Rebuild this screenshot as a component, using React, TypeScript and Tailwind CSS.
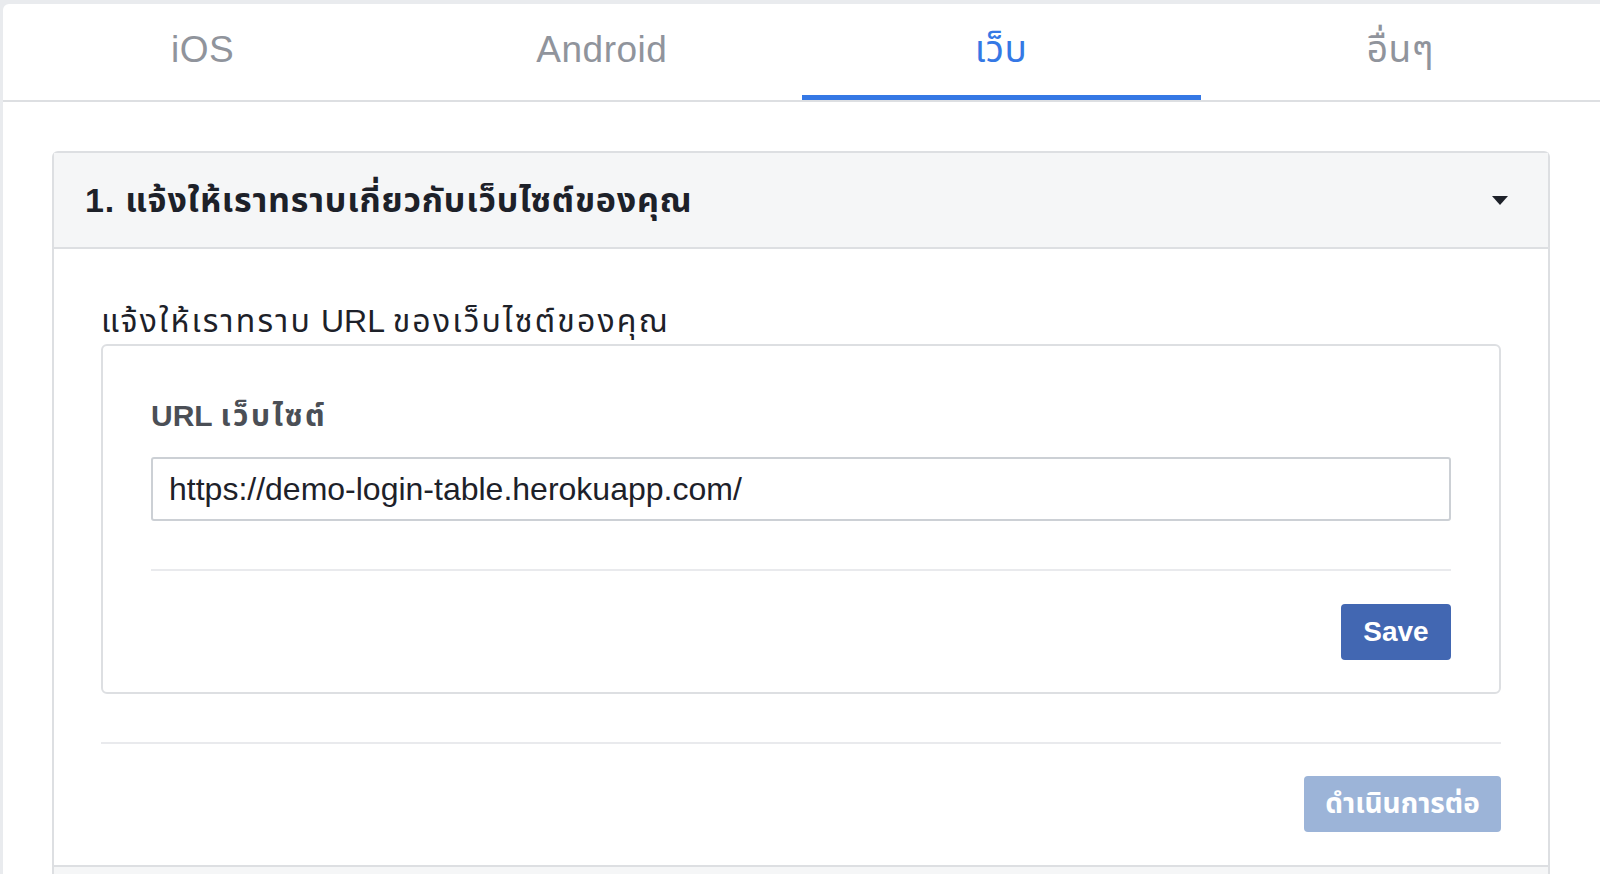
import { useState } from 'react';

const tabs = ['iOS', 'Android', 'เว็บ', 'อื่นๆ'];

export default function App() {
  const [active, setActive] = useState(2);
  const [url, setUrl] = useState('https://demo-login-table.herokuapp.com/');

  return (
    <div className="min-h-screen bg-[#e9ebee] pt-[4px] pl-[3px] font-['Liberation_Sans','Noto_Sans_Thai','Noto_Sans',sans-serif] text-[#1d2129]">
      <div className="min-h-[870px] overflow-hidden rounded-tl-[6px] bg-white">
        <div className="flex h-[98px] border-b-2 border-[#dddfe2]">
          {tabs.map((tab, i) => (
            <button
              key={tab}
              onClick={() => setActive(i)}
              className={
                'relative flex flex-1 items-center justify-center pb-[4px] text-[37px] tracking-[0.5px] ' +
                (i === active ? 'text-[#3578e5]' : 'text-[#90949c]')
              }
            >
              {tab}
              {i === active && (
                <span className="absolute bottom-0 left-0 right-0 h-[5px] bg-[#3578e5]" />
              )}
            </button>
          ))}
        </div>

        <div className="pl-[49px] pt-[49px]">
          <div className="w-[1498px] rounded-t-[6px] border-2 border-b-0 border-[#dddfe2]">
            <div className="flex h-[96px] items-center justify-between border-b-2 border-[#dddfe2] bg-[#f5f6f7] pl-[31px] pr-[40px]">
              <h2 className="text-[34px] font-bold tracking-[0.8px]">
                1. แจ้งให้เราทราบเกี่ยวกับเว็บไซต์ของคุณ
              </h2>
              <svg width="16" height="9" viewBox="0 0 16 9">
                <path d="M0 0h16L8 9z" fill="#1d2129" />
              </svg>
            </div>

            <div className="px-[47px] pt-[50px]">
              <div className="text-[32px] leading-[45px]">
                <span className="tracking-[2.2px]">แจ้งให้เราทราบ</span> URL{' '}
                <span className="tracking-[2.2px]">ของเว็บไซต์ของคุณ</span>
              </div>
              <div className="rounded-[6px] border-2 border-[#dddfe2] px-[48px] pb-[32px] pt-[50px]">
                <label className="block text-[30px] font-bold leading-[40px] text-[#4b4f56]">
                  URL <span className="tracking-[2.5px]">เว็บไซต์</span>
                </label>
                <input
                  value={url}
                  onChange={e => setUrl(e.target.value)}
                  className="mt-[21px] block h-[64px] w-full rounded-[3px] border-2 border-[#ccd0d5] px-[16px] text-[32px] text-[#1d2129] outline-none"
                />
                <div className="mt-[48px] h-[2px] bg-[#e9eaed]" />
                <div className="mt-[33px] flex justify-end">
                  <button className="h-[56px] w-[110px] rounded-[4px] bg-[#4267b2] text-[28px] font-bold text-white">
                    Save
                  </button>
                </div>
              </div>
              <div className="mt-[48px] h-[2px] bg-[#e9eaed]" />
              <div className="flex justify-end pb-[33px] pt-[32px]">
                <button
                  disabled
                  className="h-[56px] w-[197px] rounded-[4px] bg-[#9cb4d8] text-[28px] font-bold text-white"
                >
                  ดำเนินการต่อ
                </button>
              </div>
            </div>

            <div className="h-[40px] border-t-2 border-[#dddfe2] bg-[#f5f6f7]" />
          </div>
        </div>
      </div>
    </div>
  );
}
